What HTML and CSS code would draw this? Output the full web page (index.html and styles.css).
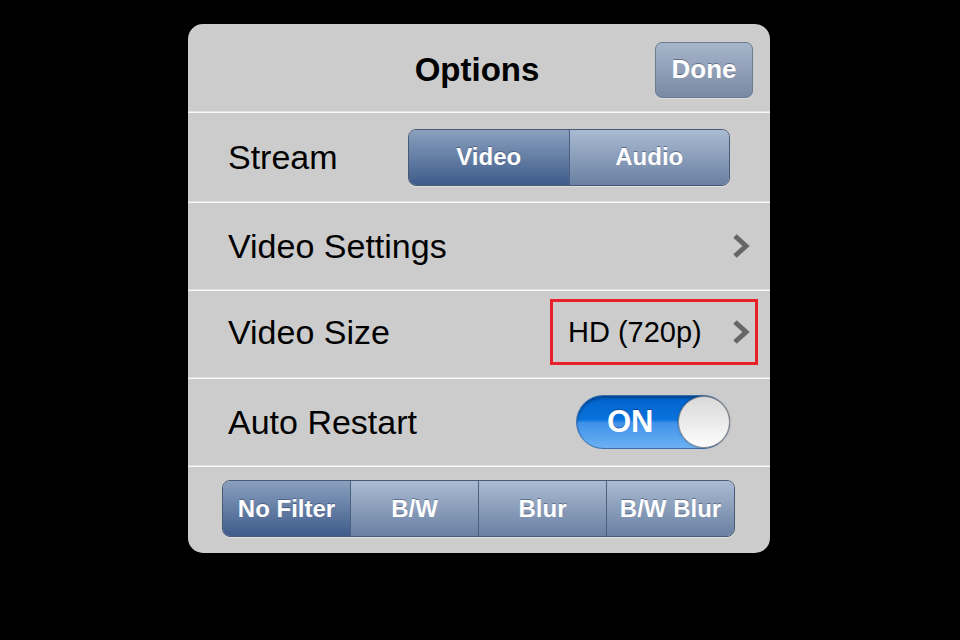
FILE: index.html
```html
<!DOCTYPE html>
<html>
<head>
<meta charset="utf-8">
<link rel="stylesheet" href="styles.css">
</head>
<body>
<div class="panel">
  <div class="header">
    <div class="title">Options</div>
    <button class="done">Done</button>
  </div>
  <div class="sep"></div>
  <div class="row row-first">
    <span class="label">Stream</span>
    <div class="seg seg-stream">
      <div class="seg-item selected">Video</div>
      <div class="seg-item">Audio</div>
    </div>
  </div>
  <div class="sep"></div>
  <div class="row row-chev">
    <span class="label">Video Settings</span>
    <svg class="chev" width="18" height="26" viewBox="0 0 18 26"><polyline points="3,3 14,13 3,23" fill="none" stroke="#666" stroke-width="5"/></svg>
  </div>
  <div class="sep"></div>
  <div class="row row-value">
    <span class="label">Video Size</span>
    <div class="highlight">
      <span class="value">HD (720p)</span>
      <svg class="chev" width="18" height="26" viewBox="0 0 18 26"><polyline points="3,3 14,13 3,23" fill="none" stroke="#666" stroke-width="5"/></svg>
    </div>
  </div>
  <div class="sep"></div>
  <div class="row">
    <span class="label">Auto Restart</span>
    <div class="switch">
      <span class="switch-text">ON</span>
      <span class="knob"></span>
    </div>
  </div>
  <div class="sep"></div>
  <div class="row row-filters">
    <div class="seg seg-filters">
      <div class="seg-item selected">No Filter</div>
      <div class="seg-item">B/W</div>
      <div class="seg-item">Blur</div>
      <div class="seg-item">B/W Blur</div>
    </div>
  </div>
</div>
</body>
</html>
```

FILE: styles.css
```css
html, body {
  margin: 0;
  padding: 0;
  background: #000;
  width: 960px;
  height: 640px;
  overflow: hidden;
  font-family: "Liberation Sans", Arial, sans-serif;
}
body {
  padding: 24px 0 0 188px;
  box-sizing: border-box;
}
.panel {
  width: 582px;
  height: 529px;
  background: #cccccc;
  border-radius: 15px;
  display: flex;
  flex-direction: column;
  overflow: hidden;
}
.header {
  height: 87px;
  display: flex;
  align-items: center;
  justify-content: center;
  position: relative;
}
.title {
  font-weight: bold;
  font-size: 33px;
  color: #000;
  margin-left: -4px;
  padding-top: 4px;
}
.done {
  position: absolute;
  right: 17px;
  top: 18px;
  width: 98px;
  height: 56px;
  border: 1px solid #6c7b92;
  border-radius: 7px;
  background: linear-gradient(#a7b5ca, #7a8aa4);
  color: #fff;
  font-family: "Liberation Sans", Arial, sans-serif;
  font-weight: bold;
  font-size: 26px;
  text-shadow: 0 -1px 0 rgba(60, 75, 100, 0.6);
  padding: 0 0 2px 0;
  box-shadow: 0 1px 0 rgba(255,255,255,0.35);
}
.sep {
  height: 2px;
  background: linear-gradient(#e2e2e2 50%, #f8f8f8 50%);
  flex: none;
}
.row {
  height: 86px;
  display: flex;
  align-items: center;
  justify-content: space-between;
  padding: 0 40px;
  flex: none;
}
.row-first {
  height: 88px;
}
.label {
  font-size: 34px;
  color: #000;
}
.seg {
  display: flex;
  height: 57px;
  box-sizing: border-box;
  border: 1px solid #485a76;
  border-radius: 8px;
  overflow: hidden;
  box-shadow: 0 1px 0 rgba(255,255,255,0.4);
}
.seg-item {
  flex: 1;
  display: flex;
  align-items: center;
  justify-content: center;
  color: #fff;
  font-weight: bold;
  font-size: 24px;
  background: linear-gradient(#aabbd2, #6a80a2);
  text-shadow: 0 -1px 0 rgba(50, 65, 95, 0.55);
  border-left: 1px solid #4c6080;
}
.seg-item:first-child {
  border-left: none;
}
.seg-item.selected {
  background: linear-gradient(#8aa0be, #3e5b8a);
}
.seg-stream {
  width: 322px;
}
.row-chev {
  padding-right: 20px;
}
.chev {
  display: block;
}
.row-value {
  padding-right: 12px;
  padding-bottom: 4px;
  box-sizing: border-box;
  height: 86px;
}
.highlight {
  display: flex;
  align-items: center;
  border: 3px solid #e8202a;
  height: 66px;
  box-sizing: border-box;
  padding: 0 5px 0 15px;
  width: 208px;
  justify-content: space-between;
}
.value {
  font-size: 29px;
  color: #000;
}
.switch {
  width: 154px;
  height: 54px;
  border-radius: 27px;
  box-sizing: border-box;
  background: linear-gradient(#0063cc 0%, #0a72dc 45%, #3f92ea 52%, #6cb1f3 100%);
  box-shadow: inset 0 2px 3px rgba(0,0,0,0.35);
  border: 1px solid #3a6fae;
  display: flex;
  align-items: center;
  justify-content: space-between;
  padding-left: 30px;
}
.switch-text {
  color: #fff;
  font-weight: bold;
  font-size: 31px;
  text-shadow: 0 -1px 0 rgba(0,40,100,0.5);
}
.knob {
  width: 52px;
  height: 52px;
  border-radius: 50%;
  box-sizing: border-box;
  border: 1px solid #8a8a8a;
  background: linear-gradient(#d9d9d9, #fdfdfd);
  box-shadow: 0 0 2px rgba(0,0,0,0.4);
  margin-right: -1px;
}
.row-filters {
  padding: 0 35px 3px 34px;
  box-sizing: border-box;
}
.seg-filters {
  width: 513px;
}
```
